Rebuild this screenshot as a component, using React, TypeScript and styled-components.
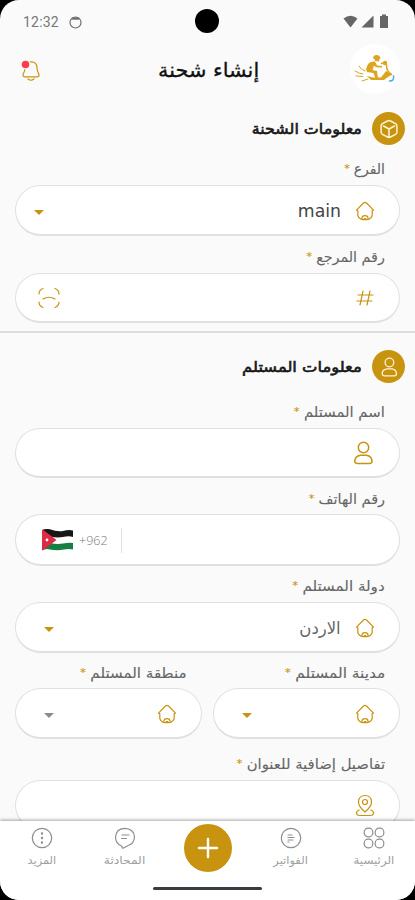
import React from "react";
import styled, { createGlobalStyle } from "styled-components";

const gold = "#c8930f";
const grey = "#8e8e8e";

const GlobalStyle = createGlobalStyle`
  * { box-sizing: border-box; }
  body { margin: 0; background: #000; }
`;

const Screen = styled.div`
  width: 415px;
  height: 900px;
  background: #fafafa;
  border-radius: 19px;
  overflow: hidden;
  display: flex;
  flex-direction: column;
  direction: rtl;
  font-family: "DejaVu Sans", "Noto Sans", sans-serif;
  color: #111;
`;

const StatusBar = styled.div`
  direction: ltr;
  height: 42px;
  flex: none;
  display: grid;
  grid-template-columns: 1fr 24px 1fr;
  align-items: center;
  padding: 0 24px 0 23px;
`;

const StatusLeft = styled.div`
  display: flex;
  align-items: center;
  gap: 10px;
  font: 14px Roboto, sans-serif;
  letter-spacing: 0.2px;
  color: #777;
  padding-top: 2px;
`;

const StatusRight = styled.div`
  display: flex;
  justify-content: flex-end;
  align-items: center;
  gap: 3px;
  padding-right: 1px;
`;

const Camera = styled.div`
  width: 24px;
  height: 24px;
  border-radius: 50%;
  background: #000;
`;

const Header = styled.header`
  height: 54px;
  flex: none;
  display: grid;
  grid-template-columns: 50px 1fr 50px;
  align-items: center;
  padding: 0 15px;
`;

const Logo = styled.div`
  width: 50px;
  height: 50px;
  border-radius: 50%;
  background: #fff;
  display: grid;
  place-items: center;
`;

const Bell = styled.div`
  display: flex;
  justify-content: flex-end;
  padding: 4px 0 0 6px;
`;

const Text = styled.span<{ $size: number; $squeeze?: number; $color?: string; $stroke?: number; $origin?: string }>`
  display: inline-block;
  white-space: nowrap;
  font-size: ${(p) => p.$size}px;
  font-weight: 400;
  -webkit-text-stroke: ${(p) => p.$stroke ?? 0}px currentColor;
  color: ${(p) => p.$color ?? "#666"};
  transform: scaleX(${(p) => p.$squeeze ?? 1});
  transform-origin: ${(p) => p.$origin ?? "right"} center;
`;

const Title = styled.h1`
  margin: 0;
  padding: 0 0 3px 2px;
  text-align: center;
  font-weight: 400;
  line-height: 26px;
`;

const Form = styled.main`
  flex: 1;
  min-height: 0;
  overflow: hidden;
  padding-top: 16px;
`;

const Section = styled.section`
  & + & {
    border-top: 2px solid #dcdcdc;
    margin-top: 8px;
    padding-top: 17px;
  }
`;

const SectionHead = styled.h2<{ $after: number }>`
  margin: 0 10px ${(p) => p.$after}px;
  height: 33px;
  display: flex;
  align-items: center;
  gap: 10px;
  font-weight: 400;
`;

const SectionIcon = styled.span`
  width: 33px;
  height: 33px;
  border-radius: 50%;
  background: ${gold};
  display: grid;
  place-items: center;
`;

const Fields = styled.div`
  padding: 0 15px;
`;

const Pair = styled.div`
  display: grid;
  grid-template-columns: 187px 187px;
  justify-content: space-between;
`;

const Label = styled.label<{ $top?: number; $bottom?: number }>`
  display: block;
  padding: ${(p) => p.$top ?? 11}px 15px ${(p) => p.$bottom ?? 6}px;
  height: ${(p) => (p.$top ?? 11) + (p.$bottom ?? 6) + 20}px;
  line-height: 20px;
`;

const Star = styled.sup`
  color: ${gold};
  font-size: 11px;
  line-height: 0;
  vertical-align: 2px;
  margin-right: 4px;
`;

const Field = styled.div<{ $h?: number; $end?: number }>`
  height: ${(p) => p.$h ?? 51}px;
  border: 1.5px solid #e0e0e0;
  border-bottom-width: 2px;
  border-radius: 26px;
  background: #fff;
  display: flex;
  align-items: center;
  gap: 14px;
  padding: 1px 24px 0 ${(p) => p.$end ?? 26}px;
`;

const Push = styled.div`
  margin-right: auto;
  display: flex;
  align-items: center;
`;

const Caret = styled.i<{ $color?: string }>`
  margin: 3px 0 0 1px;
  border: 5px solid transparent;
  border-bottom: 0;
  border-top-color: ${(p) => p.$color ?? gold};
`;

const Phone = styled.div`
  direction: ltr;
  margin-right: auto;
  display: flex;
  align-items: center;
  height: 25px;
  width: 80px;
  border-right: 1px solid #e2e2e2;
  gap: 6px;
  font: 300 12.5px "Open Sans", sans-serif;
  color: #777;
`;

const Nav = styled.nav`
  height: 79px;
  flex: none;
  background: #fff;
  box-shadow: 0 -1px 3px rgba(0, 0, 0, 0.35);
  display: flex;
  flex-direction: column;
  align-items: center;
  position: relative;
`;

const NavItems = styled.div`
  height: 65px;
  display: grid;
  grid-template-columns: repeat(5, 83px);
`;

const NavItem = styled.div`
  display: flex;
  flex-direction: column;
  align-items: center;
  padding-top: 6px;
  line-height: 16px;
  gap: 4px;
`;

const AddButton = styled.button`
  width: 48px;
  height: 48px;
  margin: 3px auto 0;
  padding: 0;
  border: 0;
  border-radius: 50%;
  background: ${gold};
  display: grid;
  place-items: center;
`;

const HomeIndicator = styled.div`
  width: 109px;
  height: 3px;
  border-radius: 2px;
  margin-top: 1px;
  background: #3c3c3c;
`;

const Icon = styled.svg.attrs({ fill: "none", strokeLinecap: "round", strokeLinejoin: "round" })<{ $c?: string; $w?: number }>`
  display: block;
  flex: none;
  stroke: ${(p) => p.$c ?? gold};
  stroke-width: ${(p) => p.$w ?? 1.2};
`;

const House = () => (
  <Icon width="20" height="20" viewBox="0 0 20 20">
    <path d="M1.5 9.2 8.5 2q1.5-1.2 3 0l7 7.2-1.3.3M2.8 9.5l-1.3-.3M2.8 9.5v5Q3.4 17 6 18.1q4 1.2 8 0 2.6-1.1 3.2-3.6v-5M7 18v-1q0-2.3 3-2.3t3 2.3v1M9.2 17.5h1.6" />
  </Icon>
);

const Person = ({ size = 24, color = gold }: { size?: number; color?: string }) => (
  <Icon width={size} height={size} viewBox="0 0 24 24" $c={color} $w={1.5}>
    <circle cx="12.5" cy="6.5" r="5.2" />
    <path d="M9.5 14.2h6q5.5 1 5.5 6 0 2.3-2.7 2.3H6.5q-2.7 0-2.7-2.3 0-5 5.7-6Z" />
  </Icon>
);

const Box = () => (
  <Icon width="20" height="20" viewBox="0 0 20 20" $c="#fff4d8" $w={1.5}>
    <path d="M8.5 2q1.5-.8 3 0l5 2.7q1.4.8 1.4 2.3v6q0 1.5-1.4 2.3l-5 2.7q-1.5.8-3 0l-5-2.7Q2.1 14.5 2.1 13V7q0-1.5 1.4-2.3ZM4.5 7 10 10l5.5-3M10 10v7.5" />
  </Icon>
);

const Scooter = () => (
  <Icon width="42" height="30" viewBox="0 0 42 30" $c="#dda51f" $w={1.5}>
    <path fill="#dda51f" stroke="none" d="M19 4.5Q19 1 22.5 1q3.5 0 4 3.500l-1 .5-.5 2.500-4-.5-.5-2Z" />
    <path fill="#dda51f" stroke="none" d="M14 10q2-3 7-2.500l2 4 5 .5v1.500l-6-.3-2-1.700-1.500 4.500 4.500 1 1 7.500h-2.500l-2-5.500-6.500-1-1-3Z" />
    <path d="m27.500 9.500 4-1 1 3q0 6 5 9M25 24.500q5 .5 6.500-2 1.500-2.500 5-2.500" />
    <circle cx="31" cy="9" r="2.2" fill="#dda51f" stroke="none" />
    <path fill="#dda51f" stroke="none" d="m32 17 6 3.500-4 2.500-4 3H17l-4-4 6 1.500h8Z" />
    <path d="M5 12q2 4 6 5M1 17q5 3 8 3M2 22l7 .5M8 27l6-2" strokeWidth="1" />
    <path d="M39.500 22q1 5-4 5" stroke="#45a9e6" />
  </Icon>
);

const Flag = () => (
  <svg width="31" height="22" viewBox="0 0 31 22">
    <clipPath id="wave"><path d="M0 1Q4-.6 8 .3q7 2.500 13 1.600Q27 .3 31 1.500V20.500q-4-1-9 0-7 1.500-14 0-4-1.500-8 1Z" /></clipPath>
    <g clipPath="url(#wave)">
      <path fill="#fff" d="M0 0h31v22H0z" />
      <path fill="#171717" d="M0 0h31v8q-4-1.500-10 0-6 1-13-.5L0 7Z" />
      <path fill="#168044" d="M0 14.500q4-1.500 8-.5 7 1.500 13 .5 6-1.200 10-.5v8H0Z" />
      <path fill="#df2945" d="M0 0 14.500 11 0 22Z" />
      <circle cx="5" cy="11" r="1.4" fill="#fff" />
    </g>
  </svg>
);

const GridIcon = () => (
  <Icon width="22" height="22" viewBox="0 0 22 22" $c={grey}>
    {[5.5, 16.5].map((x) => [5.5, 16.5].map((y) => <rect key={`${x}-${y}`} x={x - 4.3} y={y - 4.3} width="8.6" height="8.6" rx="3.8" />))}
  </Icon>
);

const BillIcon = () => (
  <Icon width="22" height="22" viewBox="0 0 22 22" $c={grey}>
    <circle cx="11" cy="11" r="9.7" />
    <path d="M8 8h4M8 10.500h6M8 13h5M8 15h1" />
  </Icon>
);

const ChatIcon = () => (
  <Icon width="22" height="22" viewBox="0 0 22 22" $c={grey}>
    <path d="M8 19.200q-6.500-2.500-6.500-9 .5-8.500 9-8.900Q20 1.500 20.500 10q-.3 6.500-6.300 8.500L9.500 21Q8 21.500 8 19.200ZM8 8h7M7.500 11.500h5" />
  </Icon>
);

const MoreIcon = () => (
  <Icon width="22" height="22" viewBox="0 0 22 22" $c={grey}>
    <circle cx="11" cy="11" r="9.7" />
    <path d="M11 6.500v.1M11 11v.1M11 15.500v.1" strokeWidth="2.4" />
  </Icon>
);

type LabelProps = { text: string; squeeze: number; top?: number; bottom?: number };

const FieldLabel = ({ text, squeeze, top, bottom }: LabelProps) => (
  <Label $top={top} $bottom={bottom}>
    <Text $size={14} $squeeze={squeeze} $stroke={0.1}>{text}<Star>*</Star></Text>
  </Label>
);

const SelectField = ({ value, caret, end = 27 }: { value?: React.ReactNode; caret?: string; end?: number }) => (
  <Field $end={end}>
    <House />
    {value}
    <Push><Caret $color={caret} /></Push>
  </Field>
);

const NavEntry = ({ icon, text, squeeze }: { icon: React.ReactNode; text: string; squeeze: number }) => (
  <NavItem>
    {icon}
    <Text $size={11} $squeeze={squeeze} $color="#a0a0a0" $origin="center">{text}</Text>
  </NavItem>
);

export default function App() {
  return (
    <>
      <GlobalStyle />
      <Screen>
        <StatusBar>
          <StatusLeft>
            12:32
            <Icon width="13" height="14" viewBox="0 0 13 14" $c="#6f6f6f">
              <circle cx="6.5" cy="7.5" r="5.5" />
              <path d="M4 3.500h5" strokeWidth="2.6" />
            </Icon>
          </StatusLeft>
          <Camera />
          <StatusRight>
            <svg width="15" height="13" viewBox="0 0 15 13"><path fill="#666" d="M.5 3.500Q7.500-2 14.500 3.500L7.500 12.500Z" /></svg>
            <svg width="13" height="13" viewBox="0 0 13 13"><path fill="#666" d="M12.500.5v12H.5Z" /></svg>
            <svg width="13" height="14" viewBox="0 0 13 14"><path fill="#666" d="M5 2V.5h4V2h2v12H3V2Z" /></svg>
          </StatusRight>
        </StatusBar>
        <Header>
          <Logo><Scooter /></Logo>
          <Title><Text $size={20} $squeeze={1.04} $stroke={0.3} $color="#111" $origin="center">إنشاء شحنة</Text></Title>
          <Bell>
            <Icon width="20" height="22" viewBox="0 0 20 22">
              <path d="M10 1.800q6 0 6 6 0 3 1.700 6 1.200 3-1.700 3H4q-2.900 0-1.700-3Q4 11 4 7.800q0-6 6-6ZM7 19q3 2.500 6 0" />
              <circle cx="4.5" cy="4.5" r="5" fill="#fafafa" stroke="none" />
              <circle cx="4.5" cy="4.5" r="3.8" fill="#fa3e4e" stroke="none" />
            </Icon>
          </Bell>
        </Header>
        <Form>
          <Section>
            <SectionHead $after={3}>
              <SectionIcon><Box /></SectionIcon>
              <Text $size={15} $color="#171717" $stroke={0.6} $squeeze={1.06}>معلومات الشحنة</Text>
            </SectionHead>
            <Fields>
              <FieldLabel text="الفرع" squeeze={1} />
              <SelectField end={17} value={<Text $size={18} $squeeze={0.96} $color="#444" dir="ltr">main</Text>} />
              <FieldLabel text="رقم المرجع" squeeze={1.02} />
              <Field $end={22} $h={50}>
                <Icon width="20" height="20" viewBox="0 0 20 20">
                  <path d="M8 3 5 17M15 3l-3 14M3 7h15M2 13h15" />
                </Icon>
                <Push>
                  <Icon width="22" height="22" viewBox="0 0 22 22">
                    <path d="M1 7q0-4 4-5.500M17 1.500Q21 3 21 7M21 15q0 4-4 5.500M5 20.500Q1 19 1 15M5 12q6-3.500 12 0" />
                  </Icon>
                </Push>
              </Field>
            </Fields>
          </Section>
          <Section>
            <SectionHead $after={8}>
              <SectionIcon><Person size={20} color="#fff4d8" /></SectionIcon>
              <Text $size={15} $color="#171717" $stroke={0.6} $squeeze={1.09}>معلومات المستلم</Text>
            </SectionHead>
            <Fields>
              <FieldLabel text="اسم المستلم" squeeze={1.06} />
              <Field $h={50}><Person /></Field>
              <FieldLabel text="رقم الهاتف" squeeze={1.03} bottom={5} />
              <Field $h={52}>
                <Phone><Flag />+962</Phone>
              </Field>
              <FieldLabel text="دولة المستلم" squeeze={1.08} top={10} />
              <SelectField value={<Text $size={17} $squeeze={0.97} $color="#666">الاردن</Text>} />
              <Pair>
                <div>
                  <FieldLabel text="مدينة المستلم" squeeze={1.1} top={10} bottom={5} />
                  <SelectField />
                </div>
                <div>
                  <FieldLabel text="منطقة المستلم" squeeze={1.08} top={10} bottom={5} />
                  <SelectField caret="#8c8c8c" />
                </div>
              </Pair>
              <FieldLabel text="تفاصيل إضافية للعنوان" squeeze={1.06} top={15} />
              <Field>
                <Icon width="20" height="24" viewBox="0 0 20 24">
                  <path d="M10 18Q3 12 3.500 7.500 4 1.500 10 1.500t6.500 6Q17 12 10 18ZM4 16q-3 1.500-2.500 3.500.5 2 3 2h11q2.500 0 3-2 .5-2-2.500-3.500" />
                  <circle cx="10" cy="8" r="2.5" />
                </Icon>
              </Field>
            </Fields>
          </Section>
        </Form>
        <Nav>
          <NavItems>
            <NavEntry icon={<GridIcon />} text="الرئيسية" squeeze={1.08} />
            <NavEntry icon={<BillIcon />} text="الفواتير" squeeze={1.04} />
            <AddButton>
              <Icon width="22" height="22" viewBox="0 0 22 22" $c="#fff" $w={2.4}><path d="M11 2v18M2 11h18" /></Icon>
            </AddButton>
            <NavEntry icon={<ChatIcon />} text="المحادثة" squeeze={1.12} />
            <NavEntry icon={<MoreIcon />} text="المزيد" squeeze={1.03} />
          </NavItems>
          <HomeIndicator />
        </Nav>
      </Screen>
    </>
  );
}
